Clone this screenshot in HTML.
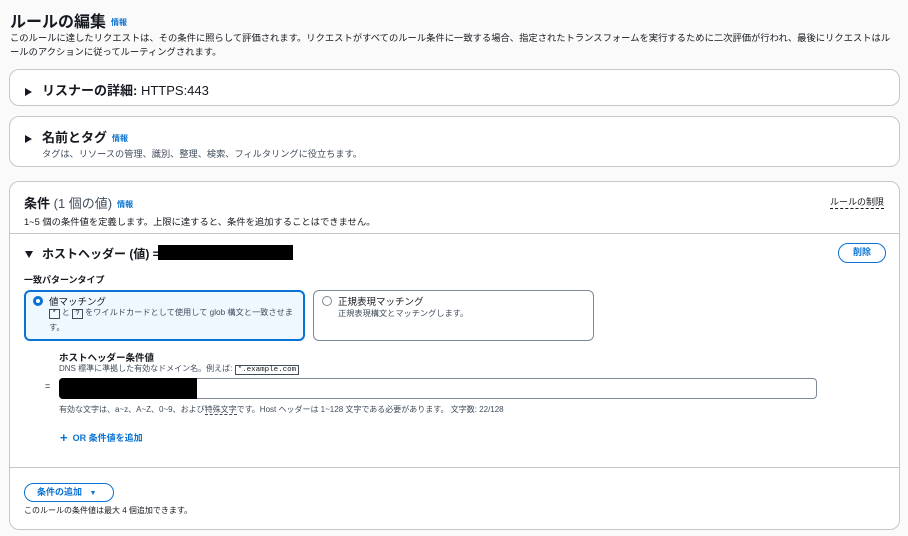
<!DOCTYPE html>
<html><head><meta charset="utf-8"><style>
*{margin:0;padding:0;box-sizing:border-box}
body{width:908px;height:536px;background:#fafafa;font-family:"Liberation Sans","Noto Sans CJK JP",sans-serif;color:#16191f;position:relative;overflow:hidden}
.a{position:absolute;white-space:nowrap}
.card{position:absolute;background:#fff;border:1px solid #c6c6cd;border-radius:10px}
.info{color:#0972d3;font-size:8px;font-weight:bold;margin-left:5px;vertical-align:middle}
.s{font-size:9px;color:#414d5c}
.tri{display:inline-block;width:0;height:0;border-top:4px solid transparent;border-bottom:4px solid transparent;border-left:7px solid #16191f;margin-right:10px;vertical-align:middle}
.trid{display:inline-block;width:0;height:0;border-left:4px solid transparent;border-right:4px solid transparent;border-top:7px solid #16191f;margin-right:9px;vertical-align:middle}
.kbd{border:1px solid #414d5c;font-family:"Liberation Mono",monospace;font-size:7.5px;padding:0 2px;color:#16191f}
</style></head><body>
<div class="a" style="left:10px;top:8px;font-size:16px;font-weight:bold">ルールの編集<span class="info">情報</span></div>
<div class="a" style="left:10px;top:31px;line-height:14px;font-size:9.3px">このルールに達したリクエストは、その条件に照らして評価されます。リクエストがすべてのルール条件に一致する場合、指定されたトランスフォームを実行するために二次評価が行われ、最後にリクエストはル<br>ールのアクションに従ってルーティングされます。</div>

<div class="card" style="left:9px;top:69px;width:891px;height:37px"></div>
<div class="a" style="left:25px;top:80px;font-size:13px;font-weight:bold"><span class="tri"></span>リスナーの詳細: <span style="font-weight:normal">HTTPS:443</span></div>

<div class="card" style="left:9px;top:116px;width:891px;height:51px"></div>
<div class="a" style="left:25px;top:127px;font-size:13px;font-weight:bold"><span class="tri"></span>名前とタグ<span class="info">情報</span></div>
<div class="a s" style="left:42px;top:146px;font-size:9.2px">タグは、リソースの管理、識別、整理、検索、フィルタリングに役立ちます。</div>

<div class="card" style="left:9px;top:181px;width:891px;height:349px"></div>
<div class="a" style="left:24px;top:193px;font-size:13px;font-weight:bold">条件 <span style="font-weight:normal;color:#414d5c">(1 個の値)</span><span class="info">情報</span></div>
<div class="a" style="left:24px;top:214px;font-size:9.3px">1~5 個の条件値を定義します。上限に達すると、条件を追加することはできません。</div>
<div class="a" style="left:830px;top:195px;font-size:9px;border-bottom:1px dashed #16191f">ルールの制限</div>
<div class="a" style="left:10px;top:233px;width:889px;height:1px;background:#c6c6cd"></div>

<div class="a" style="left:25px;top:245px;font-size:12px;font-weight:bold"><span class="trid"></span>ホストヘッダー (値) =</div>
<div class="a" style="left:158px;top:245px;width:135px;height:15px;background:#000"></div>
<div class="a" style="left:838px;top:243px;width:48px;height:20px;border:1.5px solid #0972d3;border-radius:10px;color:#0972d3;font-size:9px;font-weight:bold;text-align:center;line-height:17px">削除</div>

<div class="a" style="left:24px;top:273px;font-size:9px;font-weight:bold">一致パターンタイプ</div>
<div class="a" style="left:24px;top:290px;width:281px;height:51px;border:2px solid #0972d3;border-radius:6px;background:#f0f8ff"></div>
<div class="a" style="left:33px;top:296px;width:10px;height:10px;border:3px solid #0972d3;border-radius:50%;background:#fff"></div>
<div class="a" style="left:49px;top:294px;font-size:9.5px">値マッチング</div>
<div class="a s" style="left:49px;top:306px;line-height:13px;font-size:8.2px"><span class="kbd">*</span> と <span class="kbd">?</span> をワイルドカードとして使用して glob 構文と一致させま<br>す。</div>
<div class="a" style="left:313px;top:290px;width:281px;height:51px;border:1px solid #7d8998;border-radius:6px;background:#fff"></div>
<div class="a" style="left:322px;top:296px;width:10px;height:10px;border:1px solid #7d8998;border-radius:50%"></div>
<div class="a" style="left:338px;top:294px;font-size:9.5px">正規表現マッチング</div>
<div class="a s" style="left:338px;top:307px;font-size:8.2px">正規表現構文とマッチングします。</div>

<div class="a" style="left:59px;top:350px;font-size:9.5px;font-weight:bold">ホストヘッダー条件値</div>
<div class="a s" style="left:59px;top:363px;font-size:8px">DNS 標準に準拠した有効なドメイン名。例えば: <span class="kbd">*.example.com</span></div>
<div class="a" style="left:45px;top:381px;font-size:9px">=</div>
<div class="a" style="left:59px;top:378px;width:758px;height:21px;border:1px solid #7d8998;border-radius:4px;background:#fff"></div>
<div class="a" style="left:59px;top:378px;width:138px;height:21px;background:#000;border-radius:4px 0 0 4px"></div>
<div class="a s" style="left:59px;top:404px;font-size:8px">有効な文字は、a~z、A~Z、0~9、および<span style="border-bottom:1px dashed #414d5c">特殊文字</span>です。Host ヘッダーは 1~128 文字である必要があります。 文字数: 22/128</div>
<div class="a" style="left:60px;top:430px;font-size:9px;font-weight:bold;color:#0972d3"><span style="font-size:13px;vertical-align:-1px">+</span>&nbsp; OR 条件値を追加</div>

<div class="a" style="left:10px;top:467px;width:889px;height:1px;background:#c6c6cd"></div>
<div class="a" style="left:24px;top:483px;width:90px;height:19px;border:1.5px solid #0972d3;border-radius:10px;color:#0972d3;font-size:9px;font-weight:bold;line-height:16px;padding-left:12px">条件の追加 <span style="font-size:7px;margin-left:5px">▼</span></div>
<div class="a" style="left:24px;top:505px;font-size:8px">このルールの条件値は最大 4 個追加できます。</div>
</body></html>
